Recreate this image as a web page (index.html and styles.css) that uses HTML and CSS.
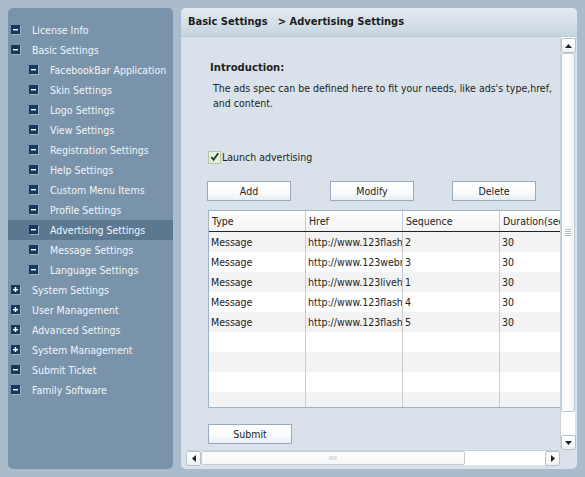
FILE: index.html
```html
<!doctype html>
<html lang="en">
<head>
  <meta charset="utf-8">
  <title>Advertising Settings</title>
  <link rel="stylesheet" href="styles.css">
</head>
<body>
  <div class="page">
    <div class="sidebar">
      <ul class="menu">
        <li class="item"><svg class="ico" viewBox="0 0 10 10"><rect x="1" y="1" width="9" height="9" fill="#9fb3c4"/><rect width="9" height="9" fill="#13395f"/><rect x="2" y="4" width="5" height="1.4" fill="#fff"/></svg>License Info</li>
        <li class="item"><svg class="ico" viewBox="0 0 10 10"><rect x="1" y="1" width="9" height="9" fill="#9fb3c4"/><rect width="9" height="9" fill="#13395f"/><rect x="2" y="4" width="5" height="1.4" fill="#fff"/></svg>Basic Settings</li>
        <li class="item sub"><svg class="ico" viewBox="0 0 10 10"><rect x="1" y="1" width="9" height="9" fill="#9fb3c4"/><rect width="9" height="9" fill="#13395f"/><rect x="2" y="4" width="5" height="1.4" fill="#fff"/></svg>FacebookBar Application</li>
        <li class="item sub"><svg class="ico" viewBox="0 0 10 10"><rect x="1" y="1" width="9" height="9" fill="#9fb3c4"/><rect width="9" height="9" fill="#13395f"/><rect x="2" y="4" width="5" height="1.4" fill="#fff"/></svg>Skin Settings</li>
        <li class="item sub"><svg class="ico" viewBox="0 0 10 10"><rect x="1" y="1" width="9" height="9" fill="#9fb3c4"/><rect width="9" height="9" fill="#13395f"/><rect x="2" y="4" width="5" height="1.4" fill="#fff"/></svg>Logo Settings</li>
        <li class="item sub"><svg class="ico" viewBox="0 0 10 10"><rect x="1" y="1" width="9" height="9" fill="#9fb3c4"/><rect width="9" height="9" fill="#13395f"/><rect x="2" y="4" width="5" height="1.4" fill="#fff"/></svg>View Settings</li>
        <li class="item sub"><svg class="ico" viewBox="0 0 10 10"><rect x="1" y="1" width="9" height="9" fill="#9fb3c4"/><rect width="9" height="9" fill="#13395f"/><rect x="2" y="4" width="5" height="1.4" fill="#fff"/></svg>Registration Settings</li>
        <li class="item sub"><svg class="ico" viewBox="0 0 10 10"><rect x="1" y="1" width="9" height="9" fill="#9fb3c4"/><rect width="9" height="9" fill="#13395f"/><rect x="2" y="4" width="5" height="1.4" fill="#fff"/></svg>Help Settings</li>
        <li class="item sub"><svg class="ico" viewBox="0 0 10 10"><rect x="1" y="1" width="9" height="9" fill="#9fb3c4"/><rect width="9" height="9" fill="#13395f"/><rect x="2" y="4" width="5" height="1.4" fill="#fff"/></svg>Custom Menu Items</li>
        <li class="item sub"><svg class="ico" viewBox="0 0 10 10"><rect x="1" y="1" width="9" height="9" fill="#9fb3c4"/><rect width="9" height="9" fill="#13395f"/><rect x="2" y="4" width="5" height="1.4" fill="#fff"/></svg>Profile Settings</li>
        <li class="item sub active"><svg class="ico" viewBox="0 0 10 10"><rect x="1" y="1" width="9" height="9" fill="#9fb3c4"/><rect width="9" height="9" fill="#13395f"/><rect x="2" y="4" width="5" height="1.4" fill="#fff"/></svg>Advertising Settings</li>
        <li class="item sub"><svg class="ico" viewBox="0 0 10 10"><rect x="1" y="1" width="9" height="9" fill="#9fb3c4"/><rect width="9" height="9" fill="#13395f"/><rect x="2" y="4" width="5" height="1.4" fill="#fff"/></svg>Message Settings</li>
        <li class="item sub"><svg class="ico" viewBox="0 0 10 10"><rect x="1" y="1" width="9" height="9" fill="#9fb3c4"/><rect width="9" height="9" fill="#13395f"/><rect x="2" y="4" width="5" height="1.4" fill="#fff"/></svg>Language Settings</li>
        <li class="item"><svg class="ico" viewBox="0 0 10 10"><rect x="1" y="1" width="9" height="9" fill="#9fb3c4"/><rect width="9" height="9" fill="#13395f"/><rect x="2" y="4" width="5" height="1.4" fill="#fff"/><rect x="3.8" y="2" width="1.4" height="5" fill="#fff"/></svg>System Settings</li>
        <li class="item"><svg class="ico" viewBox="0 0 10 10"><rect x="1" y="1" width="9" height="9" fill="#9fb3c4"/><rect width="9" height="9" fill="#13395f"/><rect x="2" y="4" width="5" height="1.4" fill="#fff"/><rect x="3.8" y="2" width="1.4" height="5" fill="#fff"/></svg>User Management</li>
        <li class="item"><svg class="ico" viewBox="0 0 10 10"><rect x="1" y="1" width="9" height="9" fill="#9fb3c4"/><rect width="9" height="9" fill="#13395f"/><rect x="2" y="4" width="5" height="1.4" fill="#fff"/><rect x="3.8" y="2" width="1.4" height="5" fill="#fff"/></svg>Advanced Settings</li>
        <li class="item"><svg class="ico" viewBox="0 0 10 10"><rect x="1" y="1" width="9" height="9" fill="#9fb3c4"/><rect width="9" height="9" fill="#13395f"/><rect x="2" y="4" width="5" height="1.4" fill="#fff"/><rect x="3.8" y="2" width="1.4" height="5" fill="#fff"/></svg>System Management</li>
        <li class="item"><svg class="ico" viewBox="0 0 10 10"><rect x="1" y="1" width="9" height="9" fill="#9fb3c4"/><rect width="9" height="9" fill="#13395f"/><rect x="2" y="4" width="5" height="1.4" fill="#fff"/></svg>Submit Ticket</li>
        <li class="item"><svg class="ico" viewBox="0 0 10 10"><rect x="1" y="1" width="9" height="9" fill="#9fb3c4"/><rect width="9" height="9" fill="#13395f"/><rect x="2" y="4" width="5" height="1.4" fill="#fff"/></svg>Family Software</li>
      </ul>
    </div>

    <div class="mainPanel">
      <div class="panelHead">Basic Settings &nbsp;&nbsp;&gt; Advertising Settings</div>
      <div class="panelBody">
        <div class="viewport">
          <div class="content">
            <div class="introTitle">Introduction:</div>
            <p class="introText">The ads spec can be defined here to fit your needs, like ads's type,href, and content.</p>

            <label class="launch"><span class="check"><svg viewBox="0 0 12 12" width="12" height="12"><path d="M2.5 6 L5 9 L10 2" fill="none" stroke="#1d3b1d" stroke-width="2"/></svg></span>Launch advertising</label>

            <div class="actions">
              <button class="btn">Add</button>
              <button class="btn">Modify</button>
              <button class="btn">Delete</button>
            </div>

            <div class="grid">
              <div class="gridRow gridHead">
                <div class="cell">Type</div><div class="cell">Href</div><div class="cell">Sequence</div><div class="cell">Duration(seconds)</div><div class="cell">Content</div>
              </div>
              <div class="gridRow"><div class="cell">Message</div><div class="cell">http://www.123flashchat.com</div><div class="cell">2</div><div class="cell">30</div><div class="cell"></div></div>
              <div class="gridRow"><div class="cell">Message</div><div class="cell">http://www.123webmessenger.com</div><div class="cell">3</div><div class="cell">30</div><div class="cell"></div></div>
              <div class="gridRow"><div class="cell">Message</div><div class="cell">http://www.123livehelp.com</div><div class="cell">1</div><div class="cell">30</div><div class="cell"></div></div>
              <div class="gridRow"><div class="cell">Message</div><div class="cell">http://www.123flashchat.com</div><div class="cell">4</div><div class="cell">30</div><div class="cell"></div></div>
              <div class="gridRow"><div class="cell">Message</div><div class="cell">http://www.123flashchat.com</div><div class="cell">5</div><div class="cell">30</div><div class="cell"></div></div>
              <div class="gridRow"><div class="cell"></div><div class="cell"></div><div class="cell"></div><div class="cell"></div><div class="cell"></div></div>
              <div class="gridRow"><div class="cell"></div><div class="cell"></div><div class="cell"></div><div class="cell"></div><div class="cell"></div></div>
              <div class="gridRow"><div class="cell"></div><div class="cell"></div><div class="cell"></div><div class="cell"></div><div class="cell"></div></div>
              <div class="gridRow short"><div class="cell"></div><div class="cell"></div><div class="cell"></div><div class="cell"></div><div class="cell"></div></div>
            </div>

            <button class="btn submit">Submit</button>
          </div>
        </div>

        <div class="vscroll">
          <div class="sbBtn"><svg viewBox="0 0 7 4" width="7" height="4"><path d="M0 4 L3.5 0 L7 4 Z" fill="#222"/></svg></div>
          <div class="vThumb"><span class="grip"></span></div>
          <div class="vTrack"></div>
          <div class="sbBtn"><svg viewBox="0 0 7 4" width="7" height="4"><path d="M0 0 L3.5 4 L7 0 Z" fill="#222"/></svg></div>
        </div>

        <div class="hscroll">
          <div class="sbBtn"><svg viewBox="0 0 4 7" width="4" height="7"><path d="M4 0 L0 3.5 L4 7 Z" fill="#222"/></svg></div>
          <div class="hThumb"><span class="hgrip"></span></div>
          <div class="hTrack"></div>
          <div class="sbBtn"><svg viewBox="0 0 4 7" width="4" height="7"><path d="M0 0 L4 3.5 L0 7 Z" fill="#222"/></svg></div>
        </div>
        <div class="corner"></div>
      </div>
    </div>
  </div>
</body>
</html>
```

FILE: styles.css
```css
html, body {
  margin: 0;
  padding: 0;
}
body {
  background: #aabccb;
  font-family: "DejaVu Sans Condensed", "DejaVu Sans", Tahoma, sans-serif;
  font-stretch: condensed;
  font-size: 10.5px;
  color: #222;
  width: 585px;
  height: 477px;
  overflow: hidden;
}
.page {
  display: flex;
  gap: 8px;
  padding: 8px;
  height: 461px;
}

/* left menu */
.sidebar {
  width: 165px;
  background: #7993ab;
  border-radius: 5px;
}
.menu {
  list-style: none;
  margin: 0;
  padding: 12px 0 0 0;
}
.item {
  display: flex;
  align-items: center;
  height: 20px;
  padding-left: 3px;
  color: #f2f5f8;
  white-space: nowrap;
}
.item .ico {
  width: 10px;
  height: 10px;
  margin-right: 11px;
  flex: none;
}
.item.sub {
  padding-left: 21px;
}
.item.active {
  background: #5c7891;
}

/* right panel */
.mainPanel {
  width: 396px;
  display: flex;
  flex-direction: column;
  border-radius: 5px;
  overflow: hidden;
  background: #d9e2ea;
}
.panelHead {
  height: 28px;
  line-height: 27px;
  padding-left: 7px;
  font-weight: bold;
  font-size: 11px;
  color: #1c1c1c;
  background: linear-gradient(to bottom, #e3e9ef 0%, #d3dee7 60%, #c6d4de 100%);
  border-bottom: 1px solid #b8c8d5;
}
.panelBody {
  flex: 1;
  display: grid;
  grid-template-columns: 374px 15px;
  grid-template-rows: 413px 15px;
  padding: 0 2px 4px 5px;
}
.viewport {
  overflow: hidden;
  position: relative;
}
.content {
  width: 600px;
  padding-left: 24px;
}
.introTitle {
  font-weight: bold;
  font-size: 11.2px;
  margin-top: 23px;
  line-height: 15px;
}
.introText {
  margin: 6px 0 0 3px;
  width: 352px;
  line-height: 15px;
}
.launch {
  display: flex;
  align-items: center;
  margin-top: 39px;
  margin-left: -2px;
  height: 14px;
}
.check {
  width: 11px;
  height: 11px;
  border: 1px solid #b5c7a8;
  background: #e6efdd;
  display: inline-flex;
  margin-right: 1px;
}
.check svg {
  margin: -1px 0 0 0;
}
.actions {
  display: flex;
  gap: 38px;
  margin-top: 17px;
  margin-left: -3px;
}
.btn {
  width: 84px;
  height: 20px;
  padding: 0;
  font: inherit;
  color: #222;
  border: 1px solid #97abbd;
  background: linear-gradient(to bottom, #ffffff 0%, #f9fbfc 60%, #e8eef3 100%);
}
.actions .btn:nth-child(2) {
  margin-left: 1px;
}

/* ads table */
.grid {
  margin-top: 9px;
  margin-left: -2px;
  width: 487px;
  border: 1px solid #9fb2c2;
  background: #fff;
}
.gridRow {
  display: grid;
  grid-template-columns: 97px 97px 97px 97px 97px;
  height: 20px;
  background: #f3f3f3;
}
.gridRow:nth-child(odd) {
  background: #fff;
}
.gridRow.gridHead {
  height: 20px;
  background: linear-gradient(to bottom, #ffffff 0%, #f3f3f3 100%);
  border-bottom: 1px solid #222;
}
.gridRow.short {
  height: 15px;
}
.cell {
  border-right: 1px solid #c3ced8;
  padding-left: 2px;
  line-height: 20px;
  white-space: nowrap;
  overflow: hidden;
}
.gridHead .cell {
  padding-left: 3px;
  line-height: 21px;
}
.submit {
  display: block;
  margin-top: 16px;
  margin-left: -2px;
}

/* scrollbars */
.vscroll {
  display: flex;
  flex-direction: column;
  background: #fff;
  border-left: 1px solid #c9d2da;
}
.sbBtn {
  width: 13px;
  height: 13px;
  border: 1px solid #b7c1ca;
  border-radius: 2px;
  background: linear-gradient(to bottom, #ffffff, #eef1f4);
  display: flex;
  align-items: center;
  justify-content: center;
  flex: none;
}
.vscroll .sbBtn {
  margin-top: 1px;
}
.vThumb {
  height: 357px;
  border: 1px solid #c3cbd3;
  border-radius: 2px;
  background: linear-gradient(to right, #fafafa, #ffffff 50%, #f0f0f0);
  display: flex;
  align-items: center;
  justify-content: center;
}
.grip {
  width: 6px;
  height: 7px;
  background: repeating-linear-gradient(to bottom, #b5bcc3 0 1px, transparent 1px 2px);
}
.vTrack {
  flex: 1;
}
.hscroll {
  display: flex;
  background: #fff;
  border-top: 1px solid #c9d2da;
}
.hscroll .sbBtn {
  width: 13px;
}
.hThumb {
  width: 262px;
  border: 1px solid #c3cbd3;
  border-radius: 2px;
  background: linear-gradient(to bottom, #ffffff, #f3f5f7);
  display: flex;
  align-items: center;
  justify-content: center;
}
.hgrip {
  width: 8px;
  height: 4px;
  background: #dfe3e7;
}
.hTrack {
  flex: 1;
}
.corner {
  background: #d9e2ea;
}
```
